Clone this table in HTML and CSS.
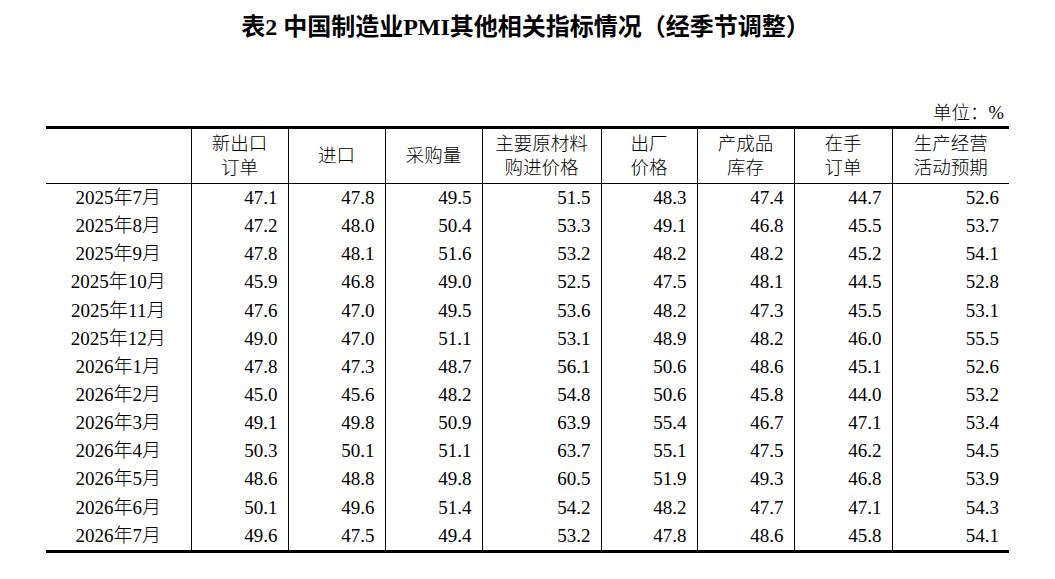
FILE: index.html
```html
<!DOCTYPE html>
<html lang="zh-CN">
<head>
<meta charset="utf-8">
<title>表2 中国制造业PMI其他相关指标情况</title>
<link rel="stylesheet" href="styles.css">
</head>
<body>
<div class="page">
  <h1 class="title">表2 中国制造业<span class="latin">PMI</span>其他相关指标情况（经季节调整）</h1>
  <div class="unit">单位：%</div>
  <table class="pmi">
    <colgroup>
      <col class="c-month">
      <col class="c-97">
      <col class="c-97">
      <col class="c-97">
      <col class="c-119">
      <col class="c-96">
      <col class="c-97">
      <col class="c-98">
      <col class="c-117">
    </colgroup>
    <thead>
      <tr>
        <th></th>
        <th>新出口<br>订单</th>
        <th>进口</th>
        <th>采购量</th>
        <th>主要原材料<br>购进价格</th>
        <th>出厂<br>价格</th>
        <th>产成品<br>库存</th>
        <th>在手<br>订单</th>
        <th>生产经营<br>活动预期</th>
      </tr>
    </thead>
    <tbody>
      <tr><td>2025年7月</td><td>47.1</td><td>47.8</td><td>49.5</td><td>51.5</td><td>48.3</td><td>47.4</td><td>44.7</td><td>52.6</td></tr>
      <tr><td>2025年8月</td><td>47.2</td><td>48.0</td><td>50.4</td><td>53.3</td><td>49.1</td><td>46.8</td><td>45.5</td><td>53.7</td></tr>
      <tr><td>2025年9月</td><td>47.8</td><td>48.1</td><td>51.6</td><td>53.2</td><td>48.2</td><td>48.2</td><td>45.2</td><td>54.1</td></tr>
      <tr><td>2025年10月</td><td>45.9</td><td>46.8</td><td>49.0</td><td>52.5</td><td>47.5</td><td>48.1</td><td>44.5</td><td>52.8</td></tr>
      <tr><td>2025年11月</td><td>47.6</td><td>47.0</td><td>49.5</td><td>53.6</td><td>48.2</td><td>47.3</td><td>45.5</td><td>53.1</td></tr>
      <tr><td>2025年12月</td><td>49.0</td><td>47.0</td><td>51.1</td><td>53.1</td><td>48.9</td><td>48.2</td><td>46.0</td><td>55.5</td></tr>
      <tr><td>2026年1月</td><td>47.8</td><td>47.3</td><td>48.7</td><td>56.1</td><td>50.6</td><td>48.6</td><td>45.1</td><td>52.6</td></tr>
      <tr><td>2026年2月</td><td>45.0</td><td>45.6</td><td>48.2</td><td>54.8</td><td>50.6</td><td>45.8</td><td>44.0</td><td>53.2</td></tr>
      <tr><td>2026年3月</td><td>49.1</td><td>49.8</td><td>50.9</td><td>63.9</td><td>55.4</td><td>46.7</td><td>47.1</td><td>53.4</td></tr>
      <tr><td>2026年4月</td><td>50.3</td><td>50.1</td><td>51.1</td><td>63.7</td><td>55.1</td><td>47.5</td><td>46.2</td><td>54.5</td></tr>
      <tr><td>2026年5月</td><td>48.6</td><td>48.8</td><td>49.8</td><td>60.5</td><td>51.9</td><td>49.3</td><td>46.8</td><td>53.9</td></tr>
      <tr><td>2026年6月</td><td>50.1</td><td>49.6</td><td>51.4</td><td>54.2</td><td>48.2</td><td>47.7</td><td>47.1</td><td>54.3</td></tr>
      <tr><td>2026年7月</td><td>49.6</td><td>47.5</td><td>49.4</td><td>53.2</td><td>47.8</td><td>48.6</td><td>45.8</td><td>54.1</td></tr>
    </tbody>
  </table>
</div>
</body>
</html>
```
FILE: styles.css
```css
html, body {
  margin: 0;
  padding: 0;
  background: #ffffff;
}

body {
  font-family: "Liberation Serif", "Noto Sans CJK SC", serif;
  font-weight: 300;
  color: #000000;
}

.page {
  width: 963px;
  margin-left: 46px;
  padding-top: 12px;
}

.title {
  margin: 0;
  font-size: 24px;
  line-height: 30px;
  font-weight: bold;
  text-align: center;
  padding-right: 4px;
}

.unit {
  margin-top: 59px;
  height: 25px;
  line-height: 24px;
  font-size: 18.5px;
  text-align: right;
  padding-right: 5px;
}

.pmi {
  border-collapse: collapse;
  table-layout: fixed;
  width: 963px;
  font-size: 19px;
}

.c-month { width: 145px; }
.c-97 { width: 97px; }
.c-119 { width: 119px; }
.c-96 { width: 96px; }
.c-98 { width: 98px; }
.c-117 { width: 117px; }

.pmi thead tr {
  border-top: 3px solid #000000;
  border-bottom: 1px solid #000000;
}

.pmi tbody tr:last-child {
  border-bottom: 3px solid #000000;
}

.pmi th {
  font-weight: 300;
  font-size: 18.5px;
  line-height: 24px;
  height: 54px;
  padding: 0;
  text-align: center;
  vertical-align: middle;
}

.pmi td {
  height: 28.15px;
  padding: 0 10px 0 0;
  line-height: 24px;
  text-align: right;
  vertical-align: middle;
}

.pmi th + th,
.pmi td + td {
  border-left: 1px solid #000000;
}

.pmi td:first-child {
  text-align: center;
  padding: 0;
}
```
